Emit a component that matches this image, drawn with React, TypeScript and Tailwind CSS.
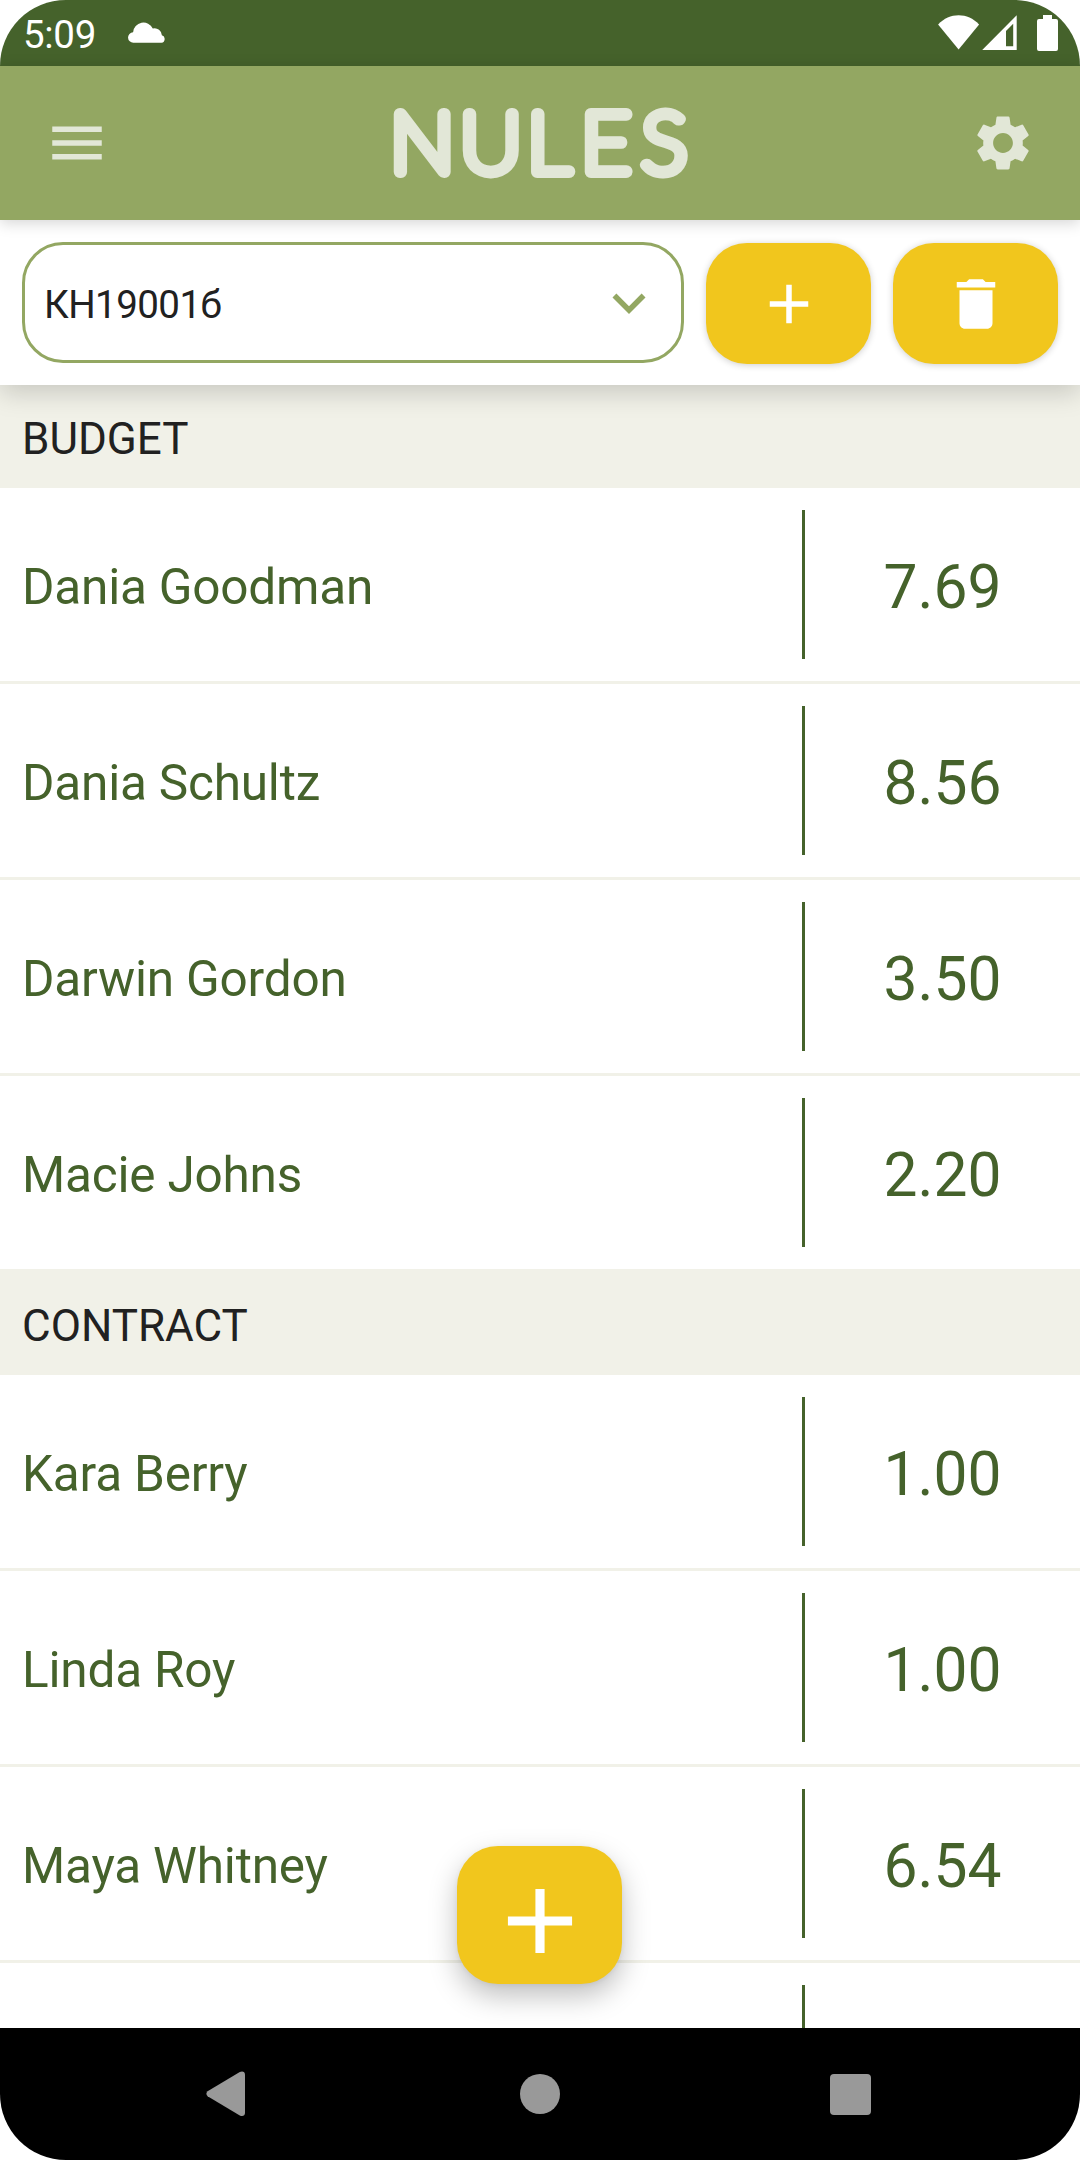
import { MdAdd, MdDelete, MdExpandMore, MdMenu, MdSettings } from "react-icons/md";

type Entry = { name: string; value: string };

const sections: { title: string; entries: Entry[] }[] = [
  {
    title: "BUDGET",
    entries: [
      { name: "Dania Goodman", value: "7.69" },
      { name: "Dania Schultz", value: "8.56" },
      { name: "Darwin Gordon", value: "3.50" },
      { name: "Macie Johns", value: "2.20" },
    ],
  },
  {
    title: "CONTRACT",
    entries: [
      { name: "Kara Berry", value: "1.00" },
      { name: "Linda Roy", value: "1.00" },
      { name: "Maya Whitney", value: "6.54" },
      { name: "", value: "" },
    ],
  },
];

function StatusBar() {
  return (
    <div className="flex h-[66px] shrink-0 items-start bg-[#45622b] text-white">
      <span className="ml-[23px] mt-[12px] w-[105px] text-[38.5px] leading-[45px] tracking-[-0.3px]">5:09</span>
      <svg className="mt-[21px]" width="38" height="23" viewBox="0 0 38 23" fill="currentColor">
        <path d="M5.5 21.7a5.2 5.2 0 0 1-.4-10.5A10.4 10.4 0 0 1 24.800 7.400 7.300 7.300 0 0 1 33.900 14.300a3.800 3.800 0 0 1-.4 7.400Z" />
      </svg>
      <svg className="ml-auto mt-[15px]" width="42" height="35" viewBox="0 0 42 35" fill="currentColor">
        <path d="M.1 9.4C6 3.200 13 .2 20.600.2S35.200 3.200 41.100 9.400L20.600 34.500Z" />
      </svg>
      <svg className="ml-[2px] mt-[15px]" width="35" height="35" viewBox="0 0 35 35" fill="currentColor">
        <path fillRule="evenodd" d="M.2 35 34.700.3V35ZM24 16v15.300h7.200V8.800Z" />
      </svg>
      <svg className="ml-[20px] mr-[22px] mt-[15px]" width="21" height="36" viewBox="0 0 21 36" fill="currentColor">
        <path d="M6 0h9v4h4a2 2 0 0 1 2 2v28a2 2 0 0 1-2 2H2a2 2 0 0 1-2-2V6a2 2 0 0 1 2-2h4Z" />
      </svg>
    </div>
  );
}

function Header() {
  return (
    <header className="relative z-20 flex h-[154px] shrink-0 items-center justify-between bg-[#93a762] px-[44px] text-[#e2e7d7] shadow-[0_3px_14px_rgba(0,0,0,0.17)]">
      <MdMenu size={66} />
      <svg
        width="360"
        height="154"
        viewBox="360 66 360 154"
        fill="currentColor"
        stroke="currentColor"
        strokeWidth="11.8"
        strokeLinejoin="round"
      >
        <text
          transform="scale(1.05 1)"
          x="371.5 437.800 502.100 553.300 611"
          y="172.300"
          fontSize="82"
          fontFamily="Lato, sans-serif"
          fontWeight="100"
        >
          NULES
        </text>
      </svg>
      <MdSettings size={66} />
    </header>
  );
}

function Toolbar() {
  return (
    <div className="relative z-10 -mb-[3px] flex h-[165px] shrink-0 items-start gap-[22px] bg-white px-[22px] pt-[22px] shadow-[0_8px_24px_rgba(0,0,0,0.17)]">
      <div className="flex h-[121px] w-[662px] items-center justify-between rounded-[41px] border-[3px] border-[#93a762] px-[19px]">
        <span className="pt-[3px] text-[38.5px] leading-[45px] tracking-[-0.55px] text-[#212121]">КН19001б</span>
        <MdExpandMore size={66} color="#93a762" />
      </div>
      <button className="mt-px flex h-[121px] w-[165px] items-center justify-center rounded-[41px] bg-[#f1c61d] text-white shadow-[0_1px_7px_rgba(0,0,0,0.2)]">
        <MdAdd size={66} />
      </button>
      <button className="mt-px flex h-[121px] w-[165px] items-center justify-center rounded-[41px] bg-[#f1c61d] text-white shadow-[0_1px_7px_rgba(0,0,0,0.2)]">
        <MdDelete size={66} />
      </button>
    </div>
  );
}

function Row({ name, value }: Entry) {
  return (
    <div className="flex h-[193px] shrink-0 items-center pl-[22px] text-[#45622b]">
      <span className="w-[780px] pt-[5px] text-[49.5px] leading-[58px] tracking-[-0.2px]">{name}</span>
      <div className="h-[149px] w-[3px] bg-[#45622b]" />
      <span className="flex-1 pt-[6px] text-center text-[60.5px] leading-[71px]">{value}</span>
    </div>
  );
}

export default function App() {
  return (
    <div className="h-[2160px] w-[1080px] bg-white font-['Roboto',sans-serif]">
      <div className="relative flex h-full flex-col overflow-hidden rounded-[66px] bg-white">
        <StatusBar />
        <Header />
        <Toolbar />
        <main className="flex min-h-0 flex-1 flex-col overflow-hidden">
          {sections.map((s) => (
            <section key={s.title} className="shrink-0">
              <h2 className="flex h-[106px] items-center bg-[#f1f1e8] pl-[22px] pt-[8px] text-[44px] leading-[52px] text-[#212121]">
                {s.title}
              </h2>
              <div className="divide-y-[3px] divide-[#f1f1e8]">
                {s.entries.map((e, i) => (
                  <div key={i}>
                    <Row {...e} />
                  </div>
                ))}
              </div>
            </section>
          ))}
        </main>
        <button className="absolute left-[457px] top-[1846px] z-10 flex h-[138px] w-[165px] items-center justify-center rounded-[41px] bg-[#f1c61d] pt-[12px] text-white shadow-[0_12px_28px_rgba(0,0,0,0.25),0_1px_5px_rgba(0,0,0,0.06)]">
          <MdAdd size={110} />
        </button>
        <nav className="relative z-20 flex h-[132px] shrink-0 items-center bg-black pl-[206px] text-[#999999]">
          <svg width="39" height="46" viewBox="0 0 39 46" fill="currentColor">
            <path d="M1.600 20.200 33.800 1C36.500-.4 39 .8 39 3.500V42c0 2.700-2.500 3.900-5.200 2.500L1.600 25.200C0 24 0 21.500 1.600 20.200Z" />
          </svg>
          <div className="ml-[275px] size-[40px] rounded-full bg-[#999999]" />
          <div className="ml-[270px] mt-px size-[41px] rounded-[4px] bg-[#999999]" />
        </nav>
      </div>
    </div>
  );
}
